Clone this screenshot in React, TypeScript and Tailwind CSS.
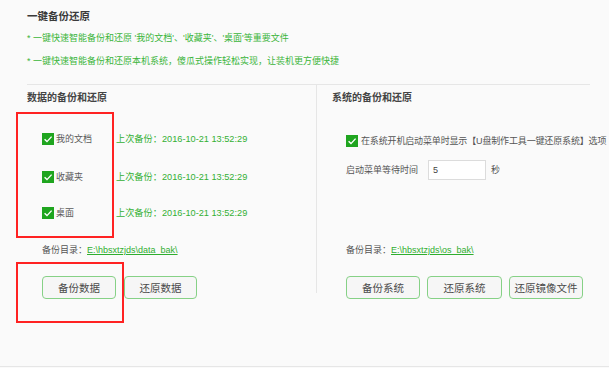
import React from 'react';

const Check: React.FC = () => (
  <svg width="12" height="12" viewBox="0 0 12 12" className="shrink-0">
    <rect width="12" height="12" fill="#1fa51f" />
    <polyline points="2.6,6.2 5,8.6 9.6,3.6" fill="none" stroke="#fff" strokeWidth="1.4" />
  </svg>
);

const Btn: React.FC<{ text: string; w: string }> = ({ text, w }) => (
  <button className={`${w} h-[23px] rounded-[4px] border-[1.5px] border-[#86d186] bg-[#f6f6f6] text-[10.5px] text-[#4a4a4a] flex items-center justify-center`}>
    {text}
  </button>
);

const files = ['我的文档', '收藏夹', '桌面'];
const rowGaps = ['mt-[27px]', 'mt-[24px]', 'mt-[22px]'];

export default function App() {
  return (
    <div className="relative w-[609px] h-[368px] bg-[#fafafa] font-['Liberation_Sans','Noto_Sans_CJK_SC',sans-serif] text-[9px] leading-[14px] text-[#555] overflow-hidden">
      <div className="pl-[27px] pt-[9px]">
        <div className="h-[14px] text-[10.5px] font-bold text-[#3a3a3a]">一键备份还原</div>
        <div className="mt-[8px] h-[14px] text-[#3bb53b]">* 一键快速智能备份和还原 '我的文档'、'收藏夹'、'桌面'等重要文件</div>
        <div className="mt-[9px] h-[14px] text-[#3bb53b]">* 一键快速智能备份和还原本机系统，傻瓜式操作轻松实现，让装机更方便快捷</div>
        <div className="mt-[16px] w-[563px] border-t border-[#e6e6e6]" />
        <div className="flex h-[208px]">
          <div className="w-[289px] flex flex-col">
            <div className="mt-[6px] h-[14px] text-[10px] font-bold text-[#444]">数据的备份和还原</div>
            {files.map((f, i) => (
              <div key={f} className={`${rowGaps[i]} h-[14px] flex items-center`}>
                <div className="ml-[15px] w-[74px] flex items-center gap-[2px]">
                  <Check />
                  <span className="text-[#5a5a5a]">{f}</span>
                </div>
                <span className="text-[#33b033] text-[9.2px]">上次备份：2016-10-21 13:52:29</span>
              </div>
            ))}
            <div className="mt-[23px] h-[14px] pl-[15px]">
              备份目录：<span className="text-[#2fae2f] underline">E:\hbsxtzjds\data_bak\</span>
            </div>
            <div className="mt-[19px] pl-[15px] flex gap-[8px]">
              <Btn text="备份数据" w="w-[74px]" />
              <Btn text="还原数据" w="w-[73px]" />
            </div>
          </div>
          <div className="w-[274px] border-l border-[#e6e6e6] flex flex-col">
            <div className="mt-[6px] h-[14px] pl-[15px] text-[10px] font-bold text-[#444]">系统的备份和还原</div>
            <div className="mt-[29px] h-[14px] pl-[29px] flex items-center gap-[3px] whitespace-nowrap">
              <Check />
              <span className="tracking-[-0.15px]">在系统开机启动菜单时显示【U盘制作工具一键还原系统】选项</span>
            </div>
            <div className="mt-[12px] h-[20px] pl-[29px] flex items-center">
              <span className="w-[82px]">启动菜单等待时间</span>
              <div className="w-[58px] h-[20px] border border-[#dcdcdc] bg-white pl-[4px] flex items-center text-[#444]">5</div>
              <span className="ml-[5px]">秒</span>
            </div>
            <div className="mt-[63px] h-[14px] pl-[29px]">
              备份目录：<span className="text-[#2fae2f] underline">E:\hbsxtzjds\os_bak\</span>
            </div>
            <div className="mt-[19px] pl-[29px] flex gap-[7px]">
              <Btn text="备份系统" w="w-[74px]" />
              <Btn text="还原系统" w="w-[75px]" />
              <Btn text="还原镜像文件" w="w-[74px]" />
            </div>
          </div>
        </div>
      </div>
      <div className="mt-[73px] border-t border-[#e6e6e6]" />
      <div className="absolute left-[16px] top-[112px] w-[98px] h-[126px] border-2 border-[#f22]" />
      <div className="absolute left-[16px] top-[262px] w-[108px] h-[61px] border-2 border-[#f22]" />
    </div>
  );
}
